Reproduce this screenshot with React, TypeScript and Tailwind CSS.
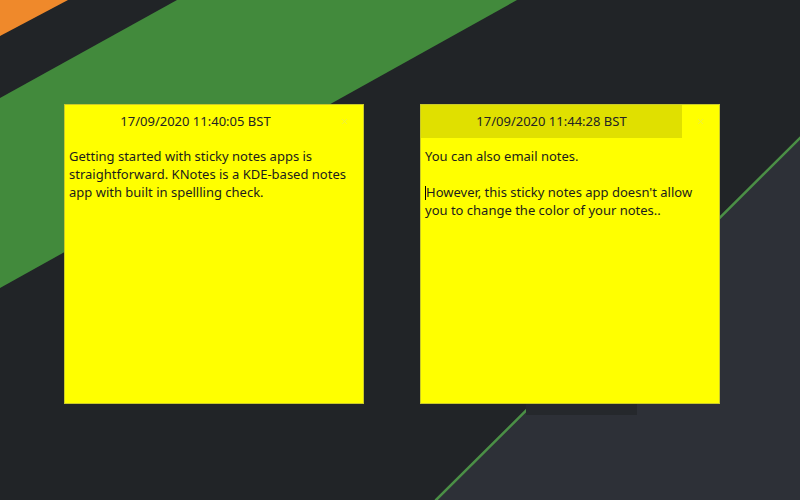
import { X } from 'lucide-react';

type Note = {
  left: string;
  stamp: string;
  active: boolean;
  lines: string[];
};

const notes: Note[] = [
  {
    left: 'left-[64px]',
    stamp: '17/09/2020 11:40:05 BST',
    active: false,
    lines: [
      'Getting started with sticky notes apps is',
      'straightforward. KNotes is a KDE-based notes',
      'app with built in spellling check.',
    ],
  },
  {
    left: 'left-[420px]',
    stamp: '17/09/2020 11:44:28 BST',
    active: true,
    lines: [
      'You can also email notes.',
      '',
      "However, this sticky notes app doesn't allow",
      'you to change the color of your notes..',
    ],
  },
];

function Wallpaper() {
  return (
    <svg
      className="absolute inset-0"
      width="800"
      height="500"
      viewBox="0 0 800 500"
    >
      <rect width="800" height="500" fill="#212427" />
      <polygon points="0,0 68,0 0,36" fill="#ef892b" />
      <polygon points="177,0 517,0 0,288 0,98" fill="#428a3c" />
      <polygon points="800,138 800,500 435,500" fill="#2d3037" />
      <line
        x1="436"
        y1="500"
        x2="801"
        y2="137"
        stroke="#4b8f46"
        strokeWidth="2.5"
        strokeLinecap="round"
      />
      <rect x="526" y="404" width="111" height="11" fill="#25282c" />
    </svg>
  );
}

function StickyNote({ note }: { note: Note }) {
  return (
    <div
      className={`absolute top-[104px] ${note.left} w-[300px] h-[300px] bg-[#ffff00] border border-[#c9c92a] flex flex-col`}
    >
      <div className="flex h-[33px] flex-none">
        <div
          className={`w-[261px] flex items-center justify-center text-[13px] text-[#232323] ${
            note.active ? 'bg-[#e0e000]' : ''
          }`}
        >
          {note.stamp}
        </div>
        <div className="flex-1 flex items-center justify-center">
          <X size={9} strokeWidth={2} className="text-[#eaea50]" />
        </div>
      </div>
      <div className="px-[4px] pt-[9px] text-[13px] leading-[18px] text-[#1c1c1c]">
        {note.lines.map((line, i) => (
          <div key={i} className="h-[18px] whitespace-nowrap">
            {note.active && line.startsWith('However') && (
              <span className="inline-block w-px h-[14px] bg-black align-[-3px]" />
            )}
            {line}
          </div>
        ))}
      </div>
    </div>
  );
}

export default function App() {
  return (
    <div
      className="relative w-[800px] h-[500px] overflow-hidden"
      style={{ fontFamily: '"Noto Sans", "DejaVu Sans", sans-serif' }}
    >
      <Wallpaper />
      {notes.map((n) => (
        <StickyNote key={n.stamp} note={n} />
      ))}
    </div>
  );
}
